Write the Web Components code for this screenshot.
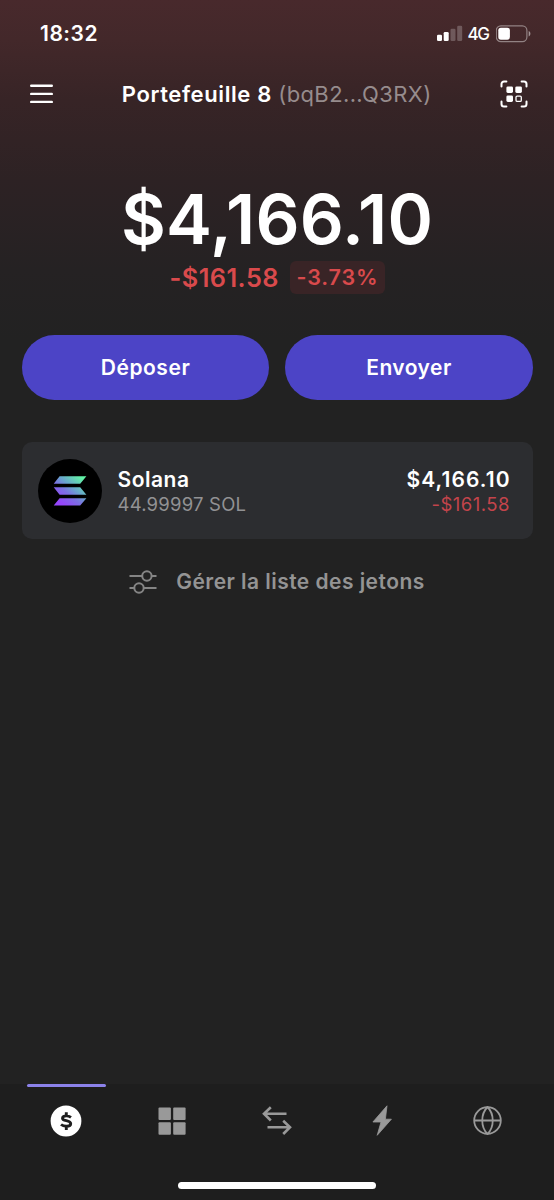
<!DOCTYPE html>
<html lang="fr">
<head>
<meta charset="utf-8">
<title>Portefeuille</title>
<style>
html,body{margin:0;height:100%;background:#222}
body{font-family:Inter,"Liberation Sans",sans-serif;color:#fff}
</style>
</head>
<body>
<wallet-app></wallet-app>
<script>
const define = (name, html, setup) => {
  const tpl = document.createElement('template');
  tpl.innerHTML = html;
  customElements.define(name, class extends HTMLElement {
    constructor() {
      super();
      this.attachShadow({ mode: 'open' }).append(tpl.content.cloneNode(true));
    }
    connectedCallback() { if (setup) setup(this, this.shadowRoot); }
  });
};

// A single line of text whose tracking is adjusted to a given width.
define('fit-text', `<style>
:host{display:block;flex:none;white-space:nowrap}
span{display:inline-block}
</style><span><slot></slot></span>`, (el, root) => {
  const w = parseFloat(el.getAttribute('w'));
  const span = root.querySelector('span');
  const n = el.textContent.length;
  span.style.letterSpacing = '0px';
  const natural = span.getBoundingClientRect().width;
  const ls = (w - natural) / (n - 1);
  span.style.letterSpacing = ls + 'px';
  span.style.marginRight = -ls + 'px';
});

define('status-bar', `<style>
:host{display:flex;align-items:center;height:67px;padding:0 23px 0 40px;justify-content:space-between}
.time{font-size:21px;font-weight:600}
.right{display:flex;align-items:center}
.net{font-size:17px;font-weight:500;margin:1px 6px 0 5px}
svg{display:block}
</style>
<fit-text class="time" w="57.5">18:32</fit-text>
<div class="right">
<svg width="26" height="17" viewBox="0 0 26 17" fill="#fff"><rect x="0" y="9.700" width="5" height="6.300" rx="1.300"/><rect x="6.700" y="6.900" width="5" height="9.100" rx="1.300"/><rect x="13.500" y="3.700" width="5" height="12.300" rx="1.300" opacity=".23"/><rect x="20.200" y=".7" width="5" height="15.300" rx="1.300" opacity=".23"/></svg>
<fit-text class="net" w="22.5">4G</fit-text>
<svg width="35" height="18" viewBox="0 0 35 18"><rect x=".3" y=".8" width="30.600" height="15.800" rx="4.600" fill="none" stroke="#fff" stroke-opacity=".42" stroke-width="1.200"/><rect x="2.300" y="2.700" width="11.600" height="12" rx="2.600" fill="#fff"/><path d="M32.700 6v5.400c1.100-.5 1.700-1.500 1.700-2.700s-.6-2.200-1.700-2.700z" fill="#fff" opacity=".5"/></svg>
</div>`);

define('wallet-header', `<style>
:host{display:flex;align-items:center;justify-content:space-between;height:54px;padding:0 26px 0 29px}
.title{display:flex;gap:7px;font-size:22px;font-weight:600;margin-left:-1px}
.addr{font-weight:400;color:#968c8d}
svg{display:block}
</style>
<svg width="25" height="22" viewBox="0 0 25 22" stroke="#fff" stroke-width="2.400" stroke-linecap="round"><path d="M2.200 2.800h20.600M2.200 10.900h20.600M2.200 18.900h20.600"/></svg>
<div class="title"><fit-text w="149.500">Portefeuille 8</fit-text><fit-text class="addr" w="153">(bqB2...Q3RX)</fit-text></div>
<svg width="28" height="28" viewBox="0 0 28 28" fill="none" stroke="#fff" stroke-width="2" stroke-linecap="round"><path d="M1.500 6.400V4a2.500 2.500 0 0 1 2.500-2.500h2.400M21.600 1.500H24A2.500 2.500 0 0 1 26.500 4v2.400M26.500 21.600V24a2.500 2.500 0 0 1-2.500 2.500h-2.400M6.400 26.500H4A2.500 2.500 0 0 1 1.500 24v-2.400"/><g fill="#fff" stroke="none"><rect x="6.400" y="6.400" width="6.600" height="6.600" rx="1.400"/><rect x="15.300" y="6.400" width="6.600" height="6.600" rx="1.400"/><rect x="6.400" y="15.400" width="6.600" height="6.600" rx="1.400"/></g><rect x="16" y="16.100" width="5.300" height="5.300" rx="1.200" stroke-width="1.300"/></svg>`);

define('balance-panel', `<style>
:host{display:flex;flex-direction:column;align-items:center;padding-top:58px;height:156px}
.total{font-size:69px;font-weight:600;line-height:80px}
.delta{display:flex;align-items:center;gap:11px;color:#d94a4c;height:33px;margin-top:1.5px}
.amount{font-size:25.3px;font-weight:600}
.pct{display:flex;align-items:center;height:33px;padding:0 7px;border-radius:6px;background:#392426;font-size:21.5px;font-weight:600}
</style>
<fit-text class="total" w="312">$4,166.10</fit-text>
<div class="delta"><fit-text class="amount" w="109">-$161.58</fit-text><div class="pct"><fit-text w="81">-3.73%</fit-text></div></div>`);

define('pill-button', `<style>
:host{display:flex;flex:1;height:64.5px;border-radius:33px;background:#4c44c6;align-items:center;justify-content:center;font-size:21px;font-weight:600}
</style><slot></slot>`);

define('solana-logo', `<style>
:host{display:flex;flex:none;width:64px;height:64px;border-radius:50%;background:#000}
</style>
<svg width="64" height="64" viewBox="0 0 64 64"><defs><linearGradient id="g" gradientUnits="userSpaceOnUse" x1="46" y1="16" x2="22" y2="45"><stop offset="0.1" stop-color="#62f2a6"/><stop offset=".45" stop-color="#69a5cd"/><stop offset=".65" stop-color="#7b70e2"/><stop offset=".95" stop-color="#9546fb"/></linearGradient></defs><path fill="url(#g)" d="M21.600 17.300h26.800L42.200 24.700H15.700zM15.700 28.300h26.500l6.200 7.400H21.600zM21.600 39.200h26.800L42.200 46.600H15.700z"/></svg>`);

define('token-row', `<style>
:host{display:flex;align-items:center;height:96.5px;border-radius:10px;background:#2c2d30;padding:0 23px 0 16px;margin:42.5px 21.5px 0}
.col{display:flex;flex-direction:column;gap:0}
.name{margin-left:16px}
.val{margin-left:auto;align-items:flex-end}
.a{font-size:21px;font-weight:600;line-height:27px}
.b{font-size:18.5px;line-height:24px;color:#929294;margin-bottom:-1px;margin-top:-1px}
.red{color:#c3444b}
</style>
<solana-logo></solana-logo>
<div class="col name"><fit-text class="a" w="71.5">Solana</fit-text><fit-text class="b" w="128.500">44.99997 SOL</fit-text></div>
<div class="col val"><fit-text class="a" w="103">$4,166.10</fit-text><fit-text class="b red" w="78">-$161.58</fit-text></div>`);

define('manage-tokens', `<style>
:host{display:flex;align-items:center;justify-content:center;gap:19.5px;height:28px;margin:29px 1px 0 0;font-size:21px;font-weight:600;color:#949494}
svg{display:block}
</style>
<svg width="28" height="24" viewBox="0 0 28 24" fill="none" stroke="#858585" stroke-width="2"><path d="M.5 6H13M22.800 6h4.700M.5 18h4.700M15 18h12.500"/><circle cx="17.900" cy="6" r="4.700"/><circle cx="10" cy="18" r="4.700"/></svg>
<fit-text w="248">Gérer la liste des jetons</fit-text>`);

define('tab-item', `<style>
:host{display:flex;flex:1;justify-content:center;color:#999}
.t{width:79px;display:flex;flex-direction:column;align-items:center}
.line{width:79px;height:3px;border-radius:1.5px}
.icon{height:67px;display:flex;align-items:center}
:host([active]) .line{background:#8c82ea}
</style><div class="t"><div class="line"></div><div class="icon"><slot></slot></div></div>`);

define('tab-bar', `<style>
:host{display:flex;flex-direction:column;margin-top:auto;height:116px;background:#1e1e1e}
.tabs{display:flex;padding:0 13.400px}
svg{display:block}
.home{width:198px;height:7px;border-radius:4px;background:#fff;margin:auto auto 11px}
</style>
<div class="tabs">
<tab-item active><svg width="32" height="32" viewBox="0 0 32 32"><circle cx="16" cy="16" r="15.400" fill="#fff"/><path d="M21 12.400c-1.400-1-3-1.500-4.800-1.500-2.300 0-3.700.8-3.700 2.300 0 3.600 8.200 1.200 8.200 5.600 0 1.700-1.600 2.500-4.200 2.500-2 0-4.100-.6-5.500-1.800M16.300 7.200v4M16.300 21v4" fill="none" stroke="#1e1e1e" stroke-width="2.900"/></svg></tab-item>
<tab-item><svg width="28" height="28" viewBox="0 0 28 28" fill="currentColor"><rect x=".5" y=".5" width="12.400" height="12.400" rx="1"/><rect x="15.200" y=".5" width="12.400" height="12.400" rx="1"/><rect x=".5" y="15.300" width="12.400" height="12.400" rx="1"/><rect x="15.200" y="15.300" width="12.400" height="12.400" rx="1"/></svg></tab-item>
<tab-item><svg width="30" height="30" viewBox="0 0 30 30" fill="none" stroke="currentColor" stroke-width="2.600"><path d="M24.500 7.800H2.500M8.800 1.300L2 7.800l6.800 6.700M5.500 21.300h22M21.200 14.800l6.800 6.500-6.800 6.700"/></svg></tab-item>
<tab-item><svg width="20" height="31" viewBox="0 0 20 31" fill="currentColor" stroke="currentColor" stroke-width=".8" stroke-linejoin="round"><path d="M15 .8L.9 17h8.100L5.200 30.300 19.400 14.200h-6z"/></svg></tab-item>
<tab-item><svg width="29" height="29" viewBox="0 0 29 29" fill="none" stroke="currentColor" stroke-width="1.800"><circle cx="14.500" cy="14.500" r="13.300"/><path d="M1 14.500h27M14.500 1C7.500 8 7.500 21 14.500 28C21.500 21 21.500 8 14.500 1z"/></svg></tab-item>
</div>
<div class="home"></div>`);

define('wallet-app', `<style>
:host{display:flex;flex-direction:column;width:554px;height:1200px;overflow:hidden;background:linear-gradient(#48292c 0,#43282a 40px,#372426 100px,#2d2224 180px,#252223 270px,#222 340px)}
.actions{display:flex;gap:16px;padding:0 21.500px;margin-top:.3px}
</style>
<status-bar></status-bar>
<wallet-header></wallet-header>
<balance-panel></balance-panel>
<div class="actions"><pill-button><fit-text w="89">Déposer</fit-text></pill-button><pill-button><fit-text w="85">Envoyer</fit-text></pill-button></div>
<token-row></token-row>
<manage-tokens></manage-tokens>
<tab-bar></tab-bar>`);
</script>
</body>
</html>
